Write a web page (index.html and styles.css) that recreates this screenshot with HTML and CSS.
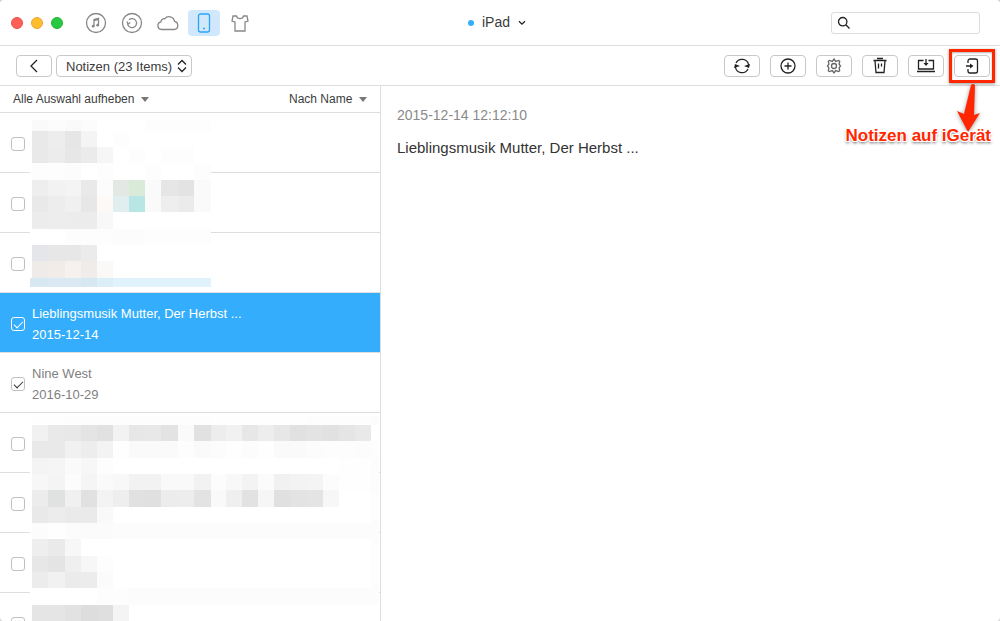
FILE: index.html
```html
<!DOCTYPE html>
<html lang="de">
<head>
<meta charset="utf-8">
<meta name="viewport" content="width=device-width, initial-scale=1">
<title>iPad – Notizen</title>
<link rel="stylesheet" href="styles.css">
</head>
<body>
<div class="window">
  <header class="titlebar">
    <div class="lights">
      <button class="light close" aria-label="Schließen"></button>
      <button class="light minimize" aria-label="Minimieren"></button>
      <button class="light zoom" aria-label="Vergrößern"></button>
    </div>
    <nav class="tabs">
      <button class="tab" aria-label="Musik">
        <svg width="22" height="22" viewBox="0 0 22 22"><circle cx="11" cy="11" r="9.5"/><path d="M9 14V7.600l4.500-1.200v6.600M9 8.500l4.500-1.200"/><circle class="dot" cx="8.200" cy="14.200" r="1.400"/><circle class="dot" cx="12.700" cy="13.200" r="1.400"/></svg>
      </button>
      <button class="tab" aria-label="Backup">
        <svg width="22" height="22" viewBox="0 0 22 22"><circle cx="11" cy="11" r="9.5"/><path d="M8 7.800a4.500 4.500 0 1 1-1.400 4M6 9.500l1 2.500 2.300-1.500"/></svg>
      </button>
      <button class="tab" aria-label="Cloud">
        <svg width="24" height="22" viewBox="0 0 24 22"><path d="M5.500 17.500a3.900 3.900 0 0 1-.5-7.700 3 3 0 0 1 3.700-3A5.500 5.500 0 0 1 18.500 9.300a4.200 4.200 0 0 1 0 8.200z"/></svg>
      </button>
      <button class="tab active" aria-label="Gerät">
        <svg width="22" height="22" viewBox="0 0 22 22"><rect x="5.500" y="2" width="11" height="18" rx="2"/><circle class="dot" cx="11" cy="16.500" r="1"/></svg>
      </button>
      <button class="tab" aria-label="Themen">
        <svg width="22" height="22" viewBox="0 0 22 22"><path d="M7.500 4C8 7.500 14 7.500 14.500 4H18l1 5-3 1v9H6v-9L3 9l1-5z"/></svg>
      </button>
    </nav>
    <button class="device"><span class="status"></span>iPad
      <svg width="8" height="6" viewBox="0 0 8 6"><path d="M1 1.200l3 3 3-3"/></svg>
    </button>
    <label class="search">
      <svg width="14" height="14" viewBox="0 0 14 14"><circle cx="5.700" cy="5.700" r="4.200"/><path d="M8.800 8.800l3.700 3.700"/></svg>
      <input type="search" aria-label="Suchen">
    </label>
  </header>

  <div class="toolbar">
    <button class="tool" aria-label="Zurück">
      <svg width="18" height="18" viewBox="0 0 18 18"><path d="M12 3L6 9l6 6"/></svg>
    </button>
    <span class="picker category">
      <select aria-label="Kategorie"><option>Notizen (23 Items)</option></select>
      <svg width="10" height="14" viewBox="0 0 10 14"><path d="M1 5.500l4-4 4 4M1 8.500l4 4 4-4"/></svg>
    </span>
    <div class="actions">
      <button class="tool" aria-label="Aktualisieren">
        <svg width="18" height="18" viewBox="0 0 18 18"><path d="M3 6a6.700 6.700 0 0 1 12.600 2M15 12a6.700 6.700 0 0 1-12.600-2"/><path class="fill" d="M17 7l-1 4-5-2zM1 11l1-4 5 2z"/></svg>
      </button>
      <button class="tool" aria-label="Hinzufügen">
        <svg width="18" height="18" viewBox="0 0 18 18"><circle cx="9" cy="9" r="7"/><path d="M5.500 9h7M9 5.500v7"/></svg>
      </button>
      <button class="tool gear" aria-label="Einstellungen">
        <svg width="18" height="18" viewBox="0 0 18 18"><path d="M9 2l1.700 2.400 2.900-.9 1.100.7-.6 3L15.500 9l-1.400 1.800.6 3-1.100.7-2.900-.9L9 16l-1.700-2.400-2.900.9-1.100-.7.6-3L2.500 9l1.400-1.800-.6-3 1.100-.7 2.900.9z"/><circle cx="9" cy="9" r="2.500"/></svg>
      </button>
      <button class="tool" aria-label="Löschen">
        <svg width="18" height="18" viewBox="0 0 18 18"><path d="M2.500 3.500h13M6 1.500h6M4 4l1 11.500h8L14 4M7.500 6.500v5M10.500 6.500v3"/></svg>
      </button>
      <button class="tool" aria-label="Auf Computer übertragen">
        <svg width="20" height="18" viewBox="0 0 20 18"><path d="M7.500 3.500h-5v8.500h15V3.500h-5M1 14.500h18M10 2v6"/><path class="fill" d="M7.500 6h5L10 9z"/></svg>
      </button>
      <div class="callout">
        <button class="tool" aria-label="Auf Gerät übertragen">
          <svg width="18" height="18" viewBox="0 0 18 18"><path d="M5 6V4a2 2 0 0 1 2-2h5.500a2 2 0 0 1 2 2v10a2 2 0 0 1-2 2H7a2 2 0 0 1-2-2v-2M3 9h6"/><path class="fill" d="M7 6.500v5L10.500 9z"/></svg>
        </button>
        <span class="frame"></span>
        <svg class="arrow" width="28" height="52" viewBox="0 0 28 52"><path d="M17 2q2-2 4 0l-1 30 6-2-12 19L3 28l7 3z"/></svg>
        <span class="note">Notizen auf iGerät</span>
      </div>
    </div>
  </div>

  <main class="content">
    <section class="sidebar">
      <div class="sortbar">
        <button class="menu">Alle Auswahl aufheben<i class="caret"></i></button>
        <span class="picker sort"><select aria-label="Sortierung"><option>Nach Name</option></select><i class="caret"></i></span>
      </div>
      <div class="list">
        <label class="row"><input type="checkbox" aria-label="Notiz 1"></label>
        <label class="row"><input type="checkbox" aria-label="Notiz 2"></label>
        <label class="row"><input type="checkbox" aria-label="Notiz 3"></label>
        <label class="row selected"><input type="checkbox" checked><span>Lieblingsmusik Mutter, Der Herbst ...<br>2015-12-14</span></label>
        <label class="row"><input type="checkbox" checked><span>Nine West<br>2016-10-29</span></label>
        <label class="row"><input type="checkbox" aria-label="Notiz 6"></label>
        <label class="row"><input type="checkbox" aria-label="Notiz 7"></label>
        <label class="row"><input type="checkbox" aria-label="Notiz 8"></label>
        <label class="row"><input type="checkbox" aria-label="Notiz 9"></label>
        <svg class="mosaic first" id="mosaic-first" width="181" height="170" aria-hidden="true"></svg>
        <svg class="mosaic second" id="mosaic-second" width="349" height="206" aria-hidden="true"></svg>
      </div>
    </section>
    <article class="detail">
      <time>2015-12-14 12:12:10</time>
      <p>Lieblingsmusik Mutter, Der Herbst ...</p>
    </article>
  </main>
</div>
<script src="mosaic.js"></script>
</body>
</html>
```

FILE: styles.css
```css
* { box-sizing: border-box; }

body {
  margin: 0;
  background: #d4d4d4;
  color: #3c3c3c;
  font: 13px/21px "Liberation Sans", Arial, sans-serif;
}

button, select, input { font: inherit; color: inherit; margin: 0; }
button { padding: 0; border: 0; background: none; }
svg { display: block; fill: none; stroke: #222; stroke-width: 1.3; flex: none; }
.fill { fill: #222; stroke: none; }

.window {
  display: flex;
  flex-direction: column;
  height: 100vh;
  overflow: hidden;
  background: #fff;
  border-radius: 4px;
}

.titlebar {
  position: relative;
  display: flex;
  align-items: center;
  flex: none;
  height: 46px;
  padding: 0 20px 0 11px;
  border-bottom: 1px solid #dedede;
}
.lights { display: flex; gap: 8px; }
.light { width: 12px; height: 12px; border-radius: 50%; }
.close { background: #ff5f57; border: 1px solid #e9514a; }
.minimize { background: #ffbd2e; border: 1px solid #e5a834; }
.zoom { background: #28c940; border: 1px solid #24b33a; }

.tabs { display: flex; gap: 4px; margin-left: 17px; }
.tab {
  display: grid;
  place-items: center;
  width: 32px;
  height: 26px;
  border-radius: 4px;
}
.tab svg { stroke: #888; }
.tab .dot { fill: #888; stroke: none; }
.tab.active { background: #d1e8fc; }
.tab.active svg { stroke: #2ba4f5; }
.tab.active .dot { fill: #2ba4f5; }

.device {
  position: absolute;
  left: 50%;
  display: flex;
  align-items: center;
  gap: 8px;
  transform: translateX(-50%);
  margin-left: -3px;
  font-size: 14px;
}
.status { width: 6px; height: 6px; border-radius: 50%; background: #34aefc; }

.search {
  display: flex;
  align-items: center;
  width: 149px;
  height: 22px;
  margin-left: auto;
  padding: 0 5px;
  gap: 4px;
  border: 1px solid #dcdcdc;
  border-radius: 3px;
}
.search input {
  flex: 1;
  min-width: 0;
  padding: 0;
  border: 0;
  outline: 0;
  background: none;
}

.toolbar {
  display: flex;
  align-items: center;
  flex: none;
  height: 40px;
  padding: 0 10px 0 16px;
  gap: 4px;
  border-bottom: 1px solid #dedede;
}
.tool {
  display: grid;
  place-items: center;
  width: 36px;
  height: 22px;
  border: 1px solid #c8c8c8;
  border-radius: 4px;
}
.gear svg { stroke: #666; }
.actions { display: flex; gap: 10px; margin-left: auto; }

.picker { position: relative; display: flex; align-items: center; }
.picker select {
  appearance: none;
  border: 0;
  outline: 0;
  background: none;
}
.picker svg, .picker .caret { position: absolute; pointer-events: none; }
.category select {
  height: 22px;
  padding: 0 18px 0 9px;
  border: 1px solid #c8c8c8;
  border-radius: 4px;
}
.category svg { right: 5px; }

.callout { position: relative; z-index: 1; }
.frame {
  position: absolute;
  inset: -6px -5px;
  border: 3px solid #ff2600;
  box-shadow: 0 1px 3px rgba(0, 0, 0, .4), inset 0 1px 2px rgba(0, 0, 0, .3);
  pointer-events: none;
}
.arrow {
  position: absolute;
  top: 28px;
  right: 8px;
  fill: #ff2600;
  stroke: none;
  filter: drop-shadow(0 1px 2px rgba(0, 0, 0, .4));
}
.note {
  position: absolute;
  top: 70px;
  right: -1px;
  color: #ff2600;
  font-size: 17px;
  font-weight: bold;
  white-space: nowrap;
  text-shadow: 1px 0 #fff, -1px 0 #fff, 0 1px #fff, 0 -1px #fff,
    1px 1px #fff, -1px -1px #fff, 1px -1px #fff, -1px 1px #fff,
    0 2px 3px rgba(0, 0, 0, .7);
}

.content { display: flex; flex: 1; min-height: 0; }
.sidebar {
  display: flex;
  flex-direction: column;
  flex: none;
  width: 381px;
  border-right: 1px solid #dedede;
}
.sortbar {
  display: flex;
  justify-content: space-between;
  align-items: center;
  flex: none;
  height: 27px;
  padding: 0 13px;
  border-bottom: 1px solid #dedede;
  font-size: 12px;
}
.menu { display: flex; align-items: center; gap: 7px; }
.sort select { padding: 0 14px 0 0; }
.sort .caret { right: 0; }
.caret {
  border: 4px solid transparent;
  border-top: 5px solid #777;
  border-bottom: 0;
}

.list { position: relative; flex: 1; min-height: 0; overflow: hidden; }
.row {
  display: flex;
  align-items: center;
  gap: 7px;
  height: 60px;
  padding: 3px 11px 0;
  border-bottom: 1px solid #dedede;
  color: #7f7f7f;
}
.row input {
  appearance: none;
  display: grid;
  place-items: center;
  flex: none;
  width: 14px;
  height: 14px;
  border: 1px solid #c0c0c0;
  border-radius: 3px;
}
.row input:checked::before {
  content: "";
  width: 8px;
  height: 4px;
  margin-bottom: 2px;
  border: solid #333;
  border-width: 0 0 1px 1px;
  transform: rotate(-45deg);
}
.selected { background: #34aefc; color: #fff; }
.row.selected input { border-color: #fff; }
.row.selected input::before { border-color: #fff; }

.mosaic { position: absolute; left: 30px; stroke: none; background: #fff; pointer-events: none; }
.first { top: 4px; }
.second { top: 303px; }

.detail { flex: 1; min-width: 0; padding: 19px 16px; font-size: 15px; }
.detail time { display: block; color: #8a8a8a; font-size: 14px; }
.detail p { margin: 11px 0 0; color: #333; }
```

FILE: mosaic.js
```js
// Column edges of the censoring tiles, measured from the list's left side.
const edges = [32, 48, 65, 81, 97, 113, 129, 145, 161, 178, 194, 211,
  226, 242, 258, 274, 290, 306, 323, 339, 355, 371, 379];

// Each row: top, height, tile tones (two digits = grey, six = colour, "-" = blank).
const first = [
  [3, 11, "fa fc fa fc - - - fd fd fd fd"],
  [14, 16, "e9 ed e6 f4 - fd"],
  [30, 16, "e9 ec e7 eb f6 - fd - fd fd"],
  [46, 17, "fd fd fc - fd - - fd - - fd"],
  [63, 16, "ee f2 f4 e9 fc e4e8e4 d9ead8 fa e6 e3 fa"],
  [79, 16, "e9 ed f0 e7 fcf9f7 e1eef0 b8e6e4 fa ee eb fa"],
  [95, 17, "ec ed ec ec f8"],
  [112, 16, "- - fd fd fd fc fc fd fd fd fd"],
  [128, 16, "e4e6e9 e7 e7 eb"],
  [144, 17, "efebe8 f2ece8 f6f1ef f0ece9 fbf9f7"],
  [161, 9, "d7e8f2 dae9f3 dae9f3 d7e8f2 dceef8 e0f3fd e0f3fd e0f3fd e0f3fd e0f3fd e0f3fd"]
];
const second = [
  [0, 9, "fe fe fd fd fd fd fd fd fd fd fd fe fe fe fe fe fe fd fd fd fd fc"],
  [9, 16, "f1 e9 e8 e4 e1 f2 e7 e8 e3 fa e1 ed f1 e7 ed e7 e1 e3 e1 e5 e9"],
  [25, 17, "e9 e9 f1 ed f3 fe fa fa fa fd fa fc fe fc fe fa fa fc fd fd fc fd"],
  [42, 16, "f4 f5 fa f7 fd - - - - - - - - - - - - - - fe fe fc"],
  [58, 16, "f7 f4 fc f5 fa f8 f2 f2 f9 f9 f2 fc f8 f3 fb f1 f3 f4 fc fe fe fc"],
  [74, 17, "ec dfe2e1 f0 e1 f3 ee e1 e0 ec ed e3 f9 ef e2 f6 e0 e3 e4 f7 - - fd"],
  [91, 16, "e9 ec ea ea f9 - - - - - - - - - - - - - - - - fd"],
  [107, 16, "fc fe fc fb fb fc fc fc fc fc fc fc fc fc fc fc fc fc fc fc fc fc"],
  [123, 17, "ee ea f7 - - - - - - - - - - - - - - - - - - fd"],
  [140, 16, "e7 e4 ef f7 fd - - - - - - - - - - - - - - - - fd"],
  [156, 16, "ec f1 eb ec fb - - - - - - - - - - - - - - - - fd"],
  [172, 17, "- - - - fd fd fc fc fc fc fc fc fc fc fc fc fc fc fc fc fc fc"],
  [189, 17, "e5 e5 e2 dd df f4"]
];

function draw(id, rows) {
  const svg = document.getElementById(id);
  for (const [top, height, tones] of rows) {
    tones.split(" ").forEach((tone, i) => {
      if (tone === "-") return;
      const tile = document.createElementNS("http://www.w3.org/2000/svg", "rect");
      const left = tone === "d7e8f2" && i === 0 ? 30 : edges[i];
      tile.setAttribute("x", left - 30);
      tile.setAttribute("y", top);
      tile.setAttribute("width", edges[i + 1] - left);
      tile.setAttribute("height", height);
      tile.setAttribute("fill", "#" + (tone.length === 2 ? tone.repeat(3) : tone));
      svg.append(tile);
    });
  }
}

draw("mosaic-first", first);
draw("mosaic-second", second);
```
